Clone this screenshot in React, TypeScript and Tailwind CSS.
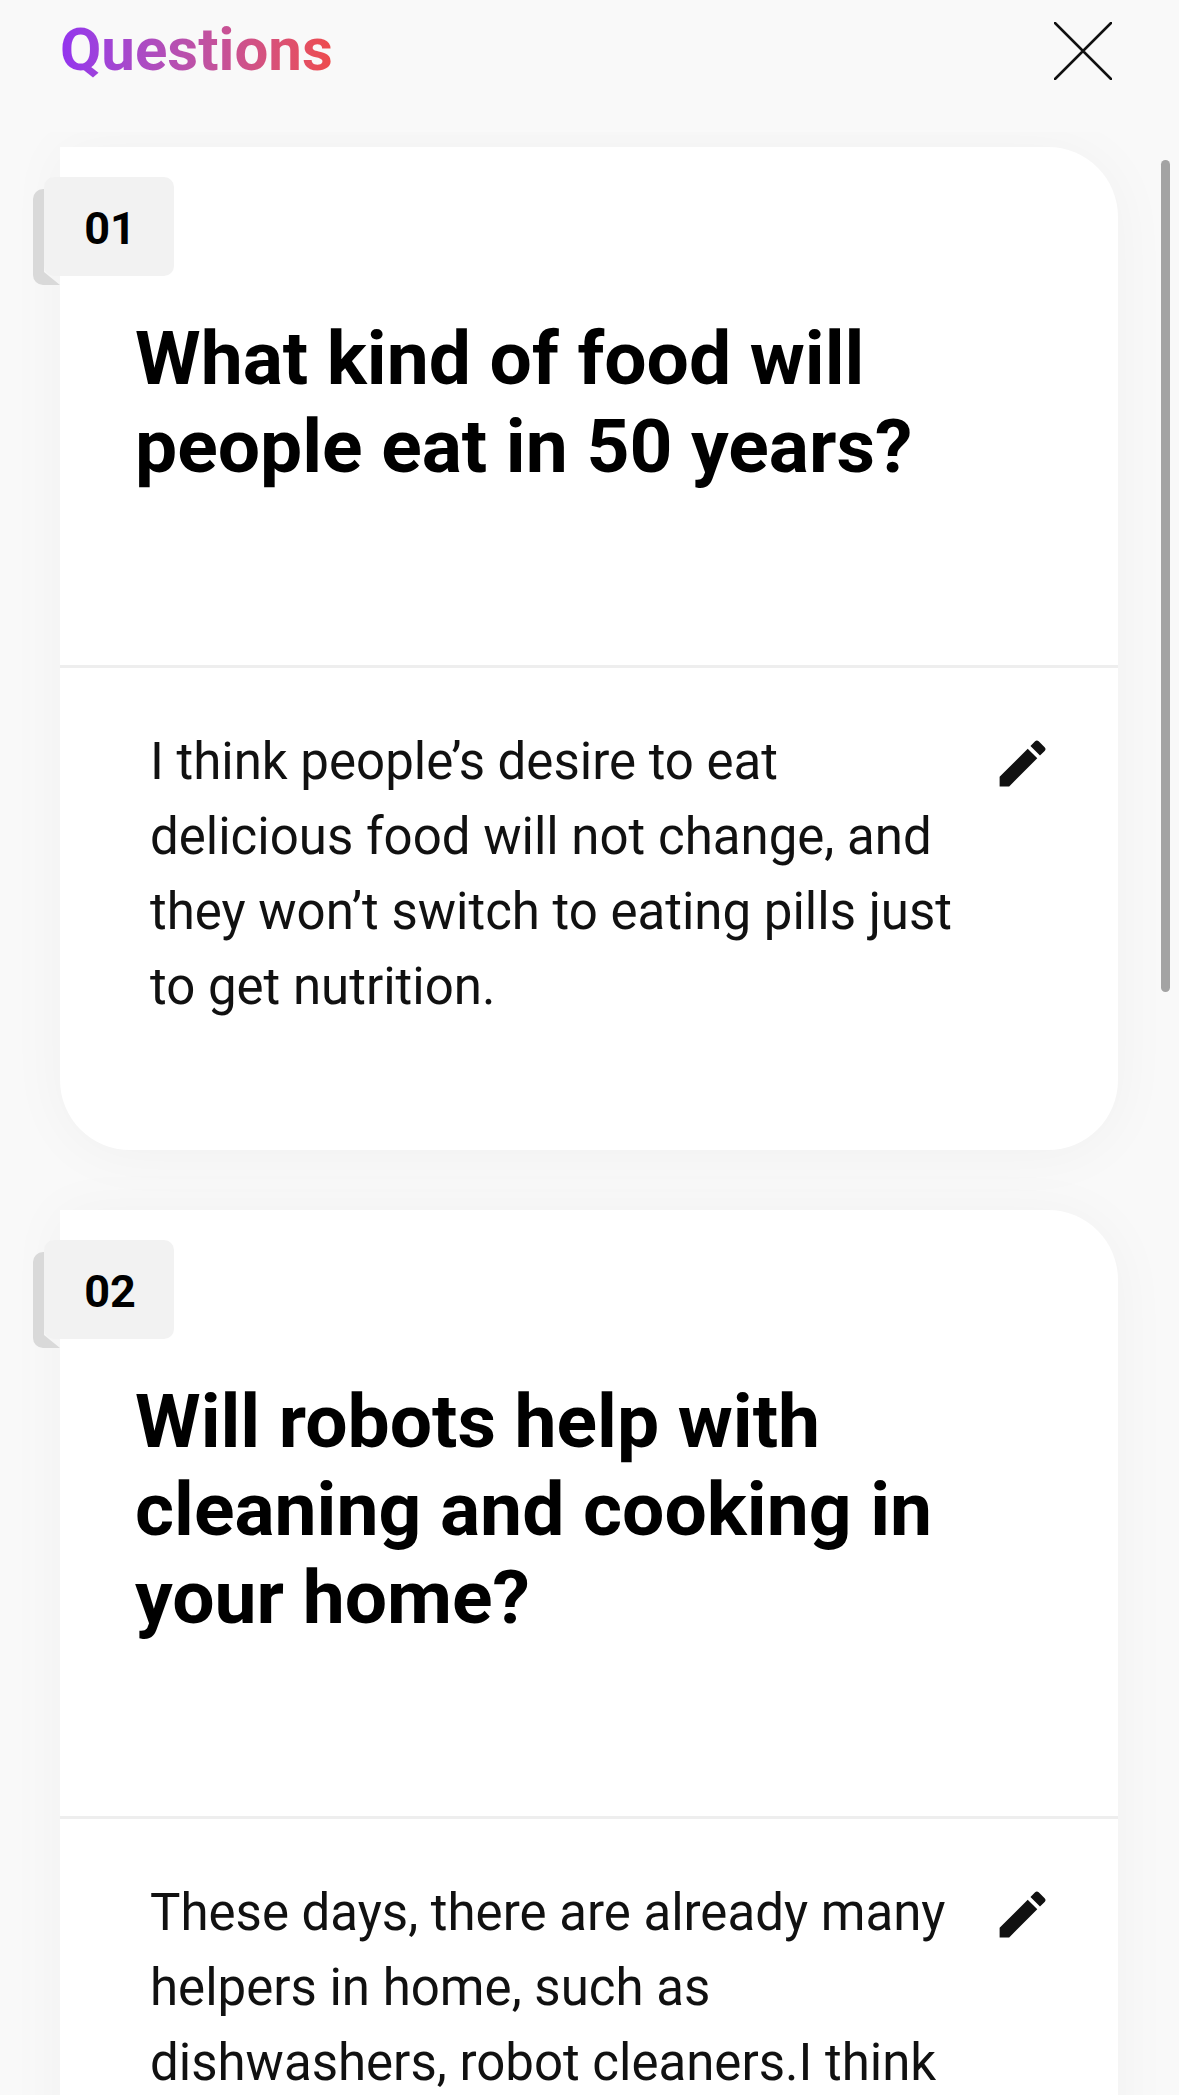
const questions = [
  {
    num: "01",
    title: ["What kind of food will", "people eat in 50 years?"],
    titleClass: "h-[521px]",
    answer: [
      "I think people’s desire to eat",
      "delicious food will not change, and",
      "they won’t switch to eating pills just",
      "to get nutrition.",
    ],
    answerClass: "h-[482px]",
  },
  {
    num: "02",
    title: ["Will robots help with", "cleaning and cooking in", "your home?"],
    titleClass: "h-[609px]",
    answer: [
      "These days, there are already many",
      "helpers in home, such as",
      "dishwashers, robot cleaners.I think",
    ],
    answerClass: "h-[482px]",
  },
];

function PencilIcon() {
  return (
    <svg viewBox="0 0 24 24" className="h-[61px] w-[61px] fill-[#111111]">
      <path d="M3 17.25V21h3.75L17.81 9.94l-3.75-3.75L3 17.25zM20.71 7.04a1 1 0 0 0 0-1.41l-2.34-2.34a1 1 0 0 0-1.41 0l-1.83 1.83 3.75 3.75 1.83-1.83z" />
    </svg>
  );
}

function QuestionCard({ q }: { q: (typeof questions)[number] }) {
  return (
    <div className="relative w-[1058px] rounded-tr-[70px] rounded-br-[70px] rounded-bl-[70px] bg-white shadow-[0_4px_60px_rgba(0,0,0,0.04)]">
      <div className="absolute top-[42px] left-[-27px] h-[96px] w-[27px] rounded-l-[10px] bg-[#d9d9d9] [clip-path:polygon(0_0,11px_0,11px_83px,27px_96px,0_96px)]" />
      <div className="absolute top-[30px] left-[-16px] flex h-[99px] w-[130px] items-center justify-center rounded-[10px] bg-[#f2f2f2] pt-[4px] pl-[2px] text-[45px] font-bold text-black">
        {q.num}
      </div>
      <div
        className={`border-b-[3px] border-[#eeeeee] pt-[167px] pl-[75px] text-[75px] leading-[88px] font-bold text-black ${q.titleClass}`}
      >
        {q.title.map((line) => (
          <div key={line}>{line}</div>
        ))}
      </div>
      <div
        className={`flex items-start justify-between pt-[56px] pr-[65px] pl-[90px] text-[51px] leading-[75px] text-[#111111] ${q.answerClass}`}
      >
        <div>
          {q.answer.map((line) => (
            <div key={line} className="whitespace-nowrap">
              {line}
            </div>
          ))}
        </div>
        <div className="mt-[9px]">
          <PencilIcon />
        </div>
      </div>
    </div>
  );
}

export default function App() {
  return (
    <div className="relative h-[2095px] w-[1179px] overflow-hidden bg-[#f9f9f9] font-['Roboto',sans-serif]">
      <div className="relative z-10 flex h-[132px] items-start justify-between bg-[#f9f9f9] pr-[67px] pl-[60px]">
        <h1 className="mt-[14px] bg-gradient-to-r from-[#9333ef] to-[#ee4b4b] bg-clip-text text-[60px] leading-[72px] font-bold text-transparent">
          Questions
        </h1>
        <svg viewBox="0 0 58 58" className="mt-[22px] h-[58px] w-[58px] stroke-[#111111] stroke-[2.5]">
          <path d="M1 1 L57 57 M57 1 L1 57" strokeLinecap="round" />
        </svg>
      </div>
      <div className="flex flex-col gap-[60px] pt-[15px] pl-[60px]">
        {questions.map((q) => (
          <QuestionCard key={q.num} q={q} />
        ))}
      </div>
      <div className="absolute top-[160px] left-[1161px] z-20 h-[832px] w-[9px] rounded-full bg-[#a3a3a3]" />
    </div>
  );
}
